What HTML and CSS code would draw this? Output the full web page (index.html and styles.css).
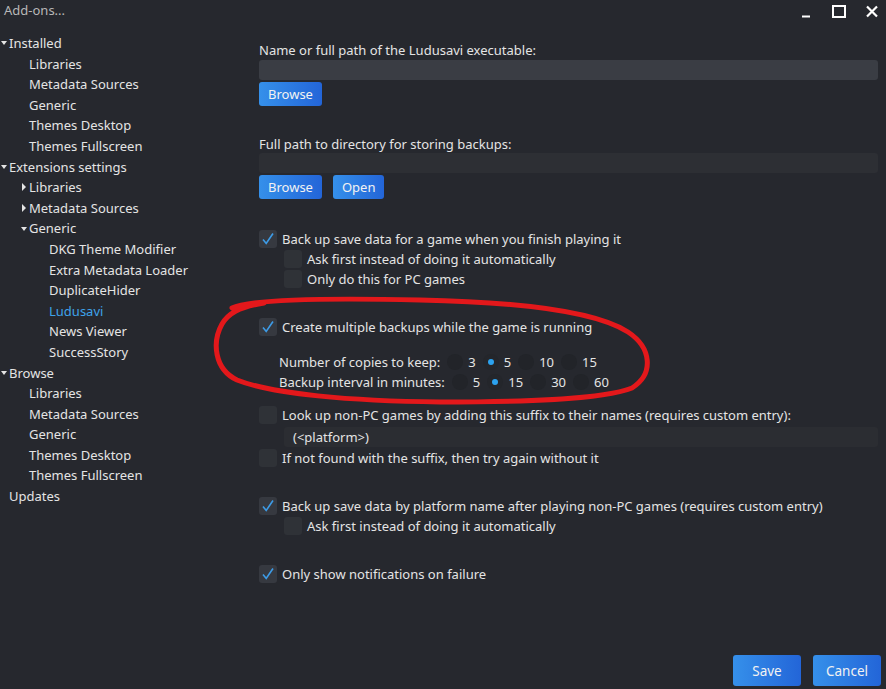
FILE: index.html
```html
<!DOCTYPE html>
<html>
<head>
<meta charset="utf-8">
<link rel="stylesheet" href="styles.css">
</head>
<body>
<div class="window">
  <div class="titlebar">
    <span class="title">Add-ons...</span>
    <div class="winbtns">
      <svg class="wb" width="14" height="14" viewBox="0 0 14 14"><path d="M3 11.5h8" stroke="#fff" stroke-width="2"/></svg>
      <svg class="wb" width="14" height="14" viewBox="0 0 14 14"><rect x="1" y="1" width="12" height="11" fill="none" stroke="#fff" stroke-width="2"/></svg>
      <svg class="wb" width="14" height="14" viewBox="0 0 14 14"><path d="M2 1.5L12 11.5M12 1.5L2 11.5" stroke="#fff" stroke-width="2.2"/></svg>
    </div>
  </div>
  <div class="body">
    <nav class="sidebar">
      <div class="row l0"><span class="arr down"></span>Installed</div>
      <div class="row l1"><span class="arr"></span>Libraries</div>
      <div class="row l1"><span class="arr"></span>Metadata Sources</div>
      <div class="row l1"><span class="arr"></span>Generic</div>
      <div class="row l1"><span class="arr"></span>Themes Desktop</div>
      <div class="row l1"><span class="arr"></span>Themes Fullscreen</div>
      <div class="row l0"><span class="arr down"></span>Extensions settings</div>
      <div class="row l1"><span class="arr right"></span>Libraries</div>
      <div class="row l1"><span class="arr right"></span>Metadata Sources</div>
      <div class="row l1"><span class="arr down"></span>Generic</div>
      <div class="row l2"><span class="arr"></span>DKG Theme Modifier</div>
      <div class="row l2"><span class="arr"></span>Extra Metadata Loader</div>
      <div class="row l2"><span class="arr"></span>DuplicateHider</div>
      <div class="row l2 active"><span class="arr"></span>Ludusavi</div>
      <div class="row l2"><span class="arr"></span>News Viewer</div>
      <div class="row l2"><span class="arr"></span>SuccessStory</div>
      <div class="row l0"><span class="arr down"></span>Browse</div>
      <div class="row l1"><span class="arr"></span>Libraries</div>
      <div class="row l1"><span class="arr"></span>Metadata Sources</div>
      <div class="row l1"><span class="arr"></span>Generic</div>
      <div class="row l1"><span class="arr"></span>Themes Desktop</div>
      <div class="row l1"><span class="arr"></span>Themes Fullscreen</div>
      <div class="row l0"><span class="arr"></span>Updates</div>
    </nav>
    <main class="main">
      <div class="label">Name or full path of the Ludusavi executable:</div>
      <div class="input light"></div>
      <div class="btns"><span class="btn">Browse</span></div>

      <div class="label sec">Full path to directory for storing backups:</div>
      <div class="input dark"></div>
      <div class="btns"><span class="btn">Browse</span><span class="btn">Open</span></div>

      <div class="check sec first-check"><span class="box on"><svg width="18" height="18" viewBox="0 0 18 18"><path d="M4 9.5L7.2 13.5L14 3.5" fill="none" stroke="#3d9be6" stroke-width="1.6"/></svg></span>Back up save data for a game when you finish playing it</div>
      <div class="check sub"><span class="box"></span>Ask first instead of doing it automatically</div>
      <div class="check sub"><span class="box"></span>Only do this for PC games</div>

      <div class="check sec"><span class="box on"><svg width="18" height="18" viewBox="0 0 18 18"><path d="M4 9.5L7.2 13.5L14 3.5" fill="none" stroke="#3d9be6" stroke-width="1.6"/></svg></span>Create multiple backups while the game is running</div>

      <div class="radios first">
        <span class="rlabel">Number of copies to keep:</span>
        <span class="radio"><span class="circ"></span>3</span>
        <span class="radio"><span class="circ sel"></span>5</span>
        <span class="radio"><span class="circ"></span>10</span>
        <span class="radio"><span class="circ"></span>15</span>
      </div>
      <div class="radios">
        <span class="rlabel">Backup interval in minutes:</span>
        <span class="radio"><span class="circ"></span>5</span>
        <span class="radio"><span class="circ sel"></span>15</span>
        <span class="radio"><span class="circ"></span>30</span>
        <span class="radio"><span class="circ"></span>60</span>
      </div>

      <div class="check lookup"><span class="box"></span>Look up non-PC games by adding this suffix to their names (requires custom entry):</div>
      <div class="input suffix">(&lt;platform&gt;)</div>
      <div class="check notfound"><span class="box"></span>If not found with the suffix, then try again without it</div>

      <div class="check sec"><span class="box on"><svg width="18" height="18" viewBox="0 0 18 18"><path d="M4 9.5L7.2 13.5L14 3.5" fill="none" stroke="#3d9be6" stroke-width="1.6"/></svg></span>Back up save data by platform name after playing non-PC games (requires custom entry)</div>
      <div class="check sub"><span class="box"></span>Ask first instead of doing it automatically</div>

      <div class="check sec"><span class="box on"><svg width="18" height="18" viewBox="0 0 18 18"><path d="M4 9.5L7.2 13.5L14 3.5" fill="none" stroke="#3d9be6" stroke-width="1.6"/></svg></span>Only show notifications on failure</div>

      <div class="footer"><span class="btn big">Save</span><span class="btn big">Cancel</span></div>
    </main>
  </div>
  <svg class="scribble" width="886" height="689" viewBox="0 0 886 689">
    <path d="M232 308 C 250 299, 330 298, 420 300 C 520 302, 595 311, 628 332 C 652 348, 654 374, 632 388 C 602 400, 520 402, 440 402 C 350 401, 272 394, 237 380 C 214 369, 212 342, 222 324 C 228 314, 238 307, 264 303" fill="none" stroke="#e3181b" stroke-width="5" stroke-linecap="round"/>
  </svg>
</div>
</body>
</html>
```
FILE: styles.css
```css
html, body {
  margin: 0;
  padding: 0;
  background: #26282e;
}
body {
  font-family: "Noto Sans", "DejaVu Sans", sans-serif;
  font-size: 13px;
  color: #e4e4e4;
}
.window {
  position: relative;
  width: 886px;
  height: 689px;
  overflow: hidden;
  display: flex;
  flex-direction: column;
}
.titlebar {
  height: 33px;
  display: flex;
  justify-content: space-between;
  flex-shrink: 0;
}
.title {
  color: #b8b8b8;
  padding-left: 4px;
  line-height: 21px;
}
.winbtns {
  display: flex;
  gap: 19px;
  padding-top: 5px;
  padding-right: 7px;
}
.wb { display: block; }
.body {
  flex: 1;
  display: flex;
}
.sidebar {
  width: 259px;
  flex-shrink: 0;
}
.row {
  height: 20.6px;
  line-height: 20.6px;
  display: flex;
  align-items: center;
  white-space: nowrap;
}
.l0 { padding-left: 0; }
.l1 { padding-left: 20px; }
.l2 { padding-left: 40px; }
.active { color: #3ea3ea; }
.arr {
  width: 9px;
  height: 8px;
  flex-shrink: 0;
  position: relative;
}
.arr.down::before {
  content: "";
  position: absolute;
  left: 1px;
  top: 2px;
  border-left: 3.5px solid transparent;
  border-right: 3.5px solid transparent;
  border-top: 4px solid #e4e4e4;
}
.arr.right::before {
  content: "";
  position: absolute;
  left: 2px;
  top: 0px;
  border-top: 4px solid transparent;
  border-bottom: 4px solid transparent;
  border-left: 4px solid #e4e4e4;
}
.main {
  flex: 1;
  padding: 7px 8px 3px 0;
  display: flex;
  flex-direction: column;
}
.label {
  line-height: 20px;
  height: 20px;
}
.label.sec { margin-top: 28px; }
.input {
  height: 20px;
  border-radius: 3px;
}
.input.light { background: #3a3d44; }
.input.dark { background: #2d2f34; margin-top: -1px; }
.btns {
  display: flex;
  gap: 11px;
  margin-top: 2px;
}
.btn {
  display: inline-flex;
  align-items: center;
  justify-content: center;
  height: 24px;
  padding: 0 9px;
  border-radius: 3px;
  background: linear-gradient(90deg, #3590ea, #2365d8);
  color: #f2f2f2;
}
.check {
  display: flex;
  align-items: center;
  height: 20px;
  line-height: 20px;
  white-space: nowrap;
}
.check.sec { margin-top: 28px; }
.check.sec.first-check { margin-top: 30px; }
.check.sub { padding-left: 25px; }
.box {
  width: 18px;
  height: 18px;
  border-radius: 3px;
  background: #2f3237;
  margin-right: 5px;
  flex-shrink: 0;
}
.box.on { background: #363940; }
.box svg { display: block; }
.radios {
  display: flex;
  align-items: center;
  height: 20px;
  padding-left: 20px;
  white-space: nowrap;
}
.radios.first { margin-top: 15px; }
.rlabel { margin-right: 7px; }
.radio {
  display: inline-flex;
  align-items: center;
  margin-right: 7px;
}
.circ {
  width: 16px;
  height: 16px;
  border-radius: 50%;
  background: #222429;
  margin-right: 5px;
  display: inline-flex;
  align-items: center;
  justify-content: center;
}
.circ.sel { background: #24262b; }
.circ.sel::after {
  content: "";
  width: 6px;
  height: 6px;
  border-radius: 50%;
  background: #2ca2ef;
}
.check.lookup { margin-top: 13px; }
.input.suffix {
  background: #2b2d32;
  margin: 2px 0 1px 25px;
  padding-left: 9px;
  line-height: 20px;
}
.footer {
  margin-top: auto;
  display: flex;
  justify-content: flex-end;
  gap: 12px;
  margin-right: -3px;
}
.btn.big {
  height: 31px;
  width: 68px;
  padding: 0;
  font-size: 13.5px;
}
.scribble {
  position: absolute;
  left: 0;
  top: 0;
  pointer-events: none;
}
```
